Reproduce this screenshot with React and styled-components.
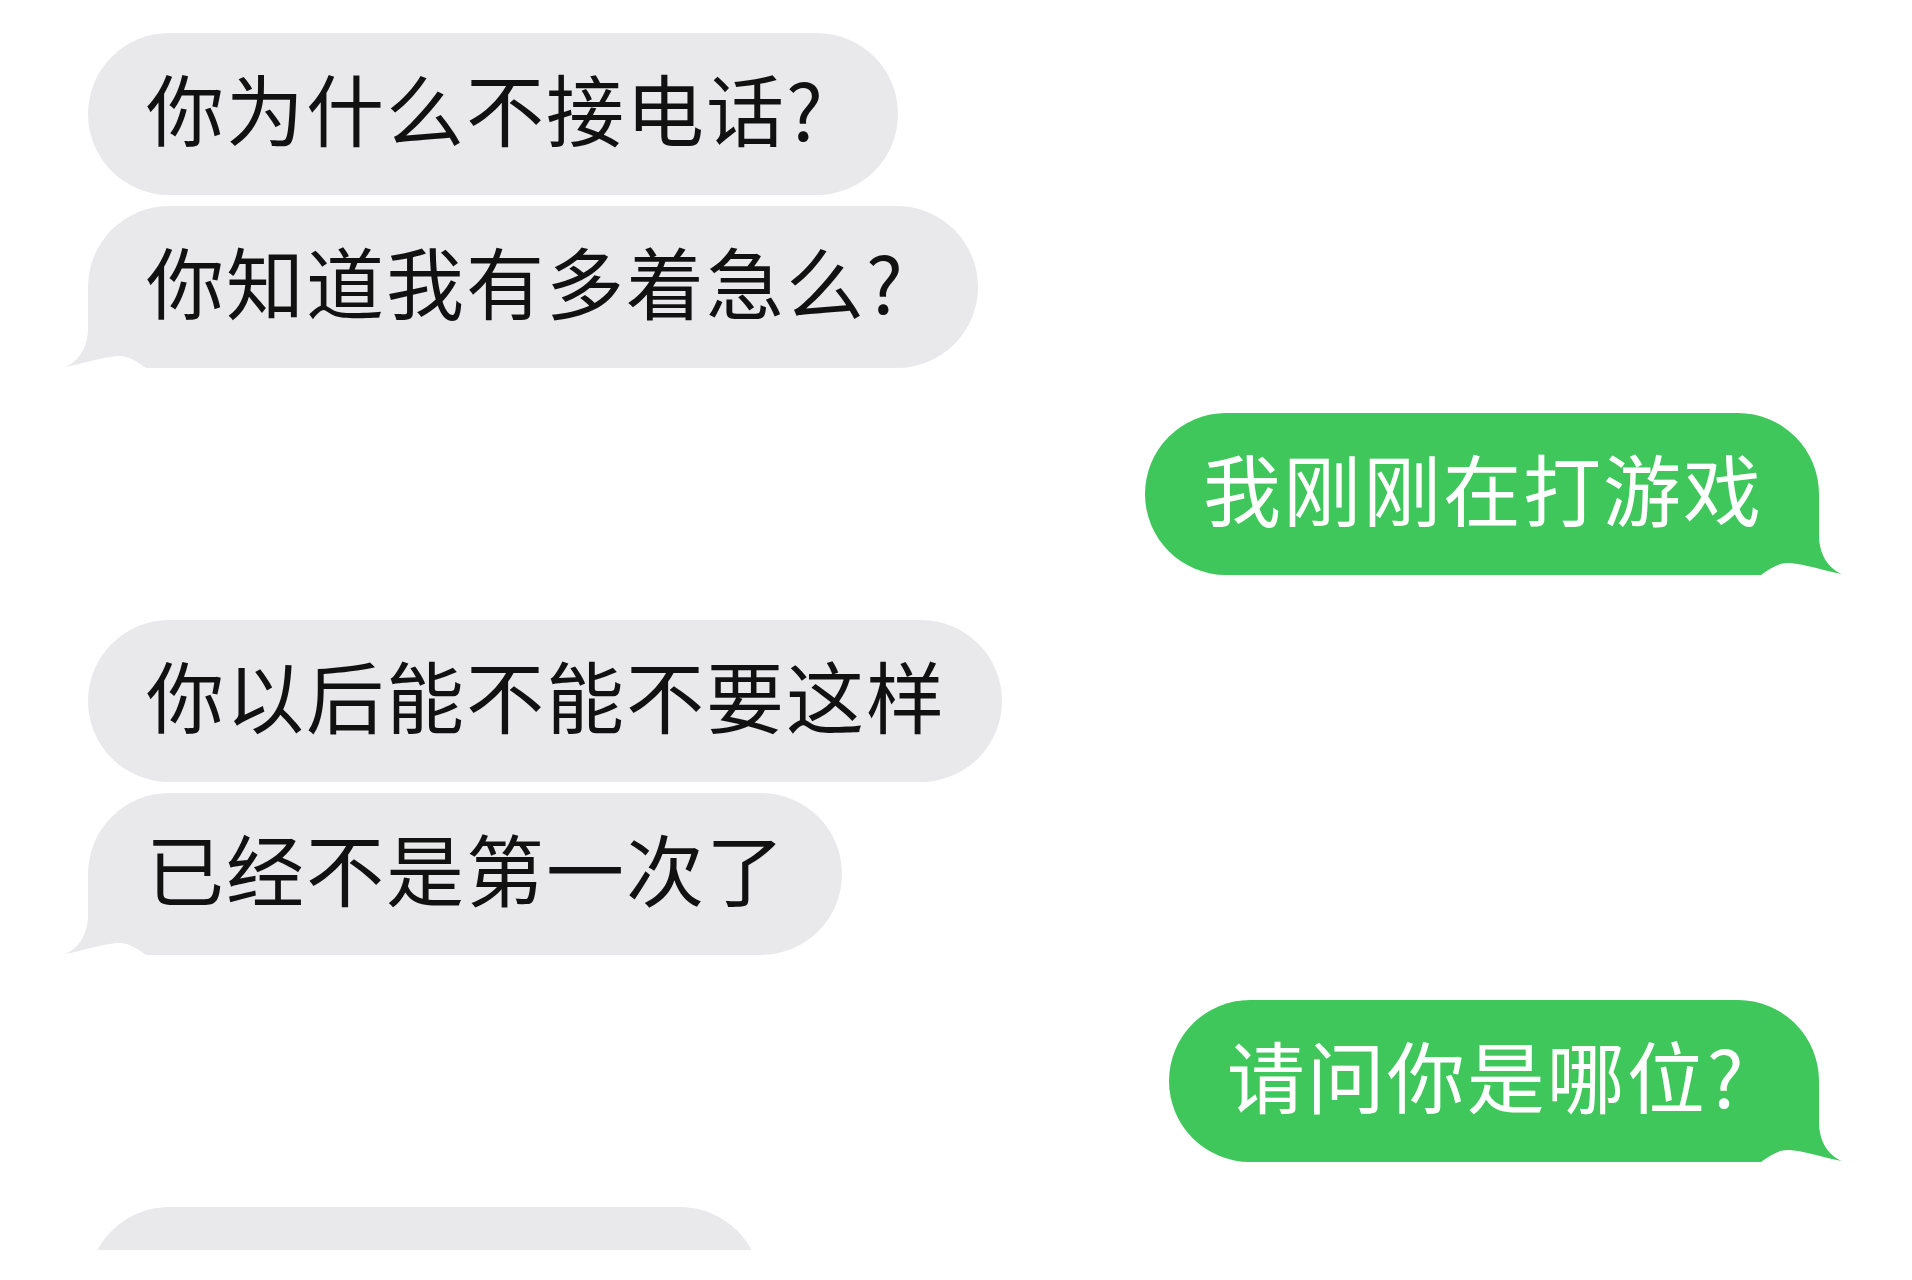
import React from 'react'
import styled, { createGlobalStyle, css } from 'styled-components'

const GRAY = '#e9e9eb'
const GREEN = '#3fc75b'

const GlobalStyle = createGlobalStyle`
    html, body {
        margin: 0;
        padding: 0;
        background: #fff;
    }
    body {
        font-family: "Noto Sans CJK SC", "Noto Sans", sans-serif;
    }
`

const Thread = styled.div`
    box-sizing: border-box;
    height: 1250px;
    overflow: hidden;
    padding: 33px 93px 0 88px;
    display: flex;
    flex-direction: column;
    gap: 45px;
`

const Group = styled.div`
    display: flex;
    flex-direction: column;
    gap: 11px;
    align-items: ${p => (p.$mine ? 'flex-end' : 'flex-start')};
`

const Bubble = styled.div`
    position: relative;
    z-index: 0;
    box-sizing: border-box;
    flex: none;
    height: 162px;
    padding: 0 56px 14px 58px;
    border-radius: 81px;
    display: flex;
    align-items: center;
    font-size: 78px;
    letter-spacing: 2px;
    line-height: 1;
    white-space: nowrap;
    background: ${p => (p.$mine ? GREEN : GRAY)};
    color: ${p => (p.$mine ? '#fff' : '#111')};
    ${p => p.$width && css`width: ${p.$width}px;`}
`

const Mark = styled.span`
    display: inline-block;
    width: 0.72em;
`

const TailSvg = styled.svg`
    position: absolute;
    z-index: -1;
    bottom: 0;
    width: 110px;
    height: 80px;
    ${p => (p.$mine
        ? css`right: -26px; transform: scaleX(-1);`
        : css`left: -26px;`)}
`

function Tail({ mine }) {
    return (
        <TailSvg $mine={mine} viewBox="0 0 110 80" aria-hidden="true">
            <path
                d="M26 0 L26 40 C26 60 16 74 3 79 C20 76 40 69 55 68 C66 67 76 74 84 80 L110 80 L110 0 Z"
                fill={mine ? GREEN : GRAY}
            />
        </TailSvg>
    )
}

function Text({ children }) {
    // the trailing ascii question mark sits in a wider slot, as in the shot
    if (children.endsWith('?')) {
        return <span>{children.slice(0, -1)}<Mark>?</Mark></span>
    }
    return <span>{children}</span>
}

const thread = [
    { mine: false, lines: ['你为什么不接电话?', '你知道我有多着急么?'] },
    { mine: true, lines: ['我刚刚在打游戏'] },
    { mine: false, lines: ['你以后能不能不要这样', '已经不是第一次了'] },
    { mine: true, lines: ['请问你是哪位?'] },
]

export default function App() {
    return (
        <>
            <GlobalStyle />
            <Thread>
                {thread.map((group, gi) => (
                    <Group key={gi} $mine={group.mine}>
                        {group.lines.map((line, li) => (
                            <Bubble key={li} $mine={group.mine}>
                                <Text>{line}</Text>
                                {li === group.lines.length - 1 && <Tail mine={group.mine} />}
                            </Bubble>
                        ))}
                    </Group>
                ))}
                <Group>
                    <Bubble $width={673} />
                </Group>
            </Thread>
        </>
    )
}
